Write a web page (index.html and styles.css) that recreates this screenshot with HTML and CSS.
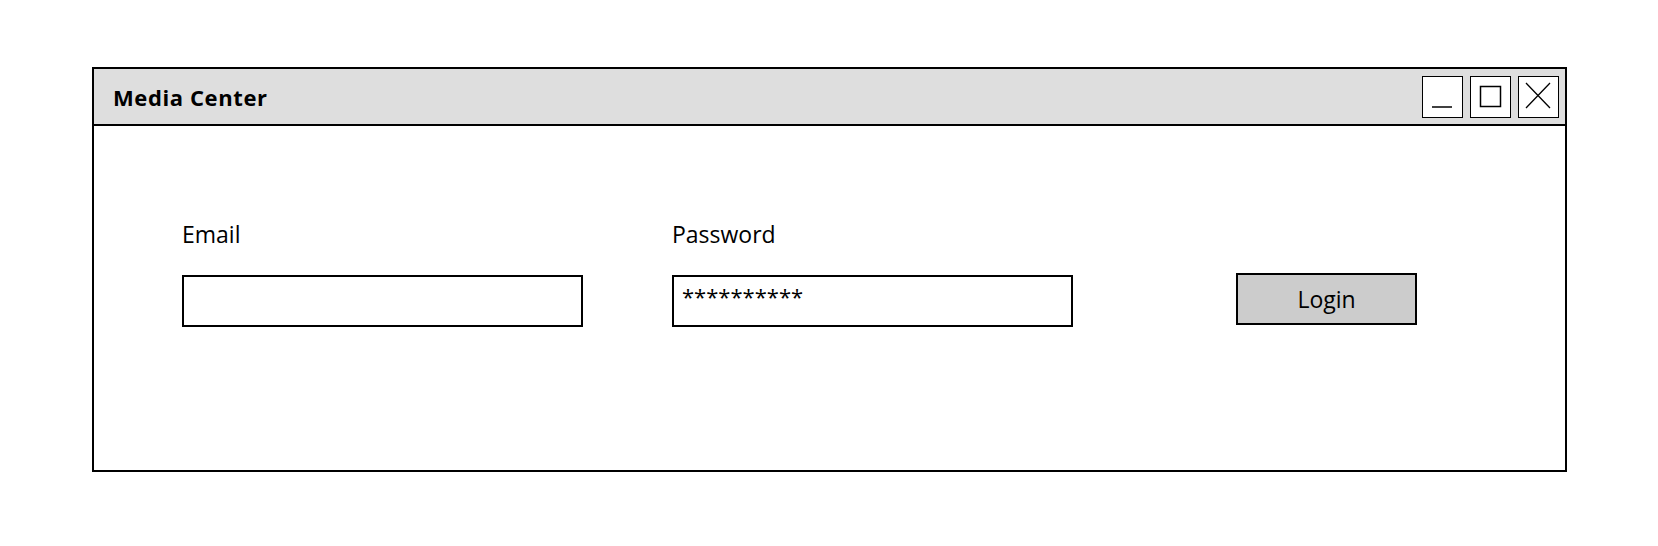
FILE: index.html
```html
<!DOCTYPE html>
<html lang="en">
<head>
    <meta charset="UTF-8">
    <meta name="viewport" content="width=device-width, initial-scale=1.0">
    <title>Media Center</title>
    <link rel="stylesheet" href="styles.css">
</head>
<body>
    <div class="window">
        <!-- title bar -->
        <header class="titlebar">
            <h1>Media Center</h1>
            <div class="win-buttons">
                <span class="win-btn">
                    <svg viewBox="0 0 40 42" width="40" height="42"><path d="M10 32 H30" stroke="#000" stroke-width="1.5" fill="none"/></svg>
                </span>
                <span class="win-btn">
                    <svg viewBox="0 0 40 42" width="40" height="42"><rect x="10.5" y="11.5" width="20" height="20" stroke="#000" stroke-width="1.5" fill="none"/></svg>
                </span>
                <span class="win-btn">
                    <svg viewBox="0 0 40 42" width="40" height="42"><path d="M8 8 L32 33 M32 8 L8 33" stroke="#000" stroke-width="1.3" fill="none"/></svg>
                </span>
            </div>
        </header>

        <!-- login form -->
        <form class="login-form">
            <div class="field">
                <label for="email">Email</label>
                <input type="text" id="email" class="textbox">
            </div>
            <div class="field">
                <label for="password">Password</label>
                <input type="text" id="password" class="textbox" value="**********">
            </div>
            <button type="button" class="login-btn">Login</button>
        </form>
    </div>
</body>
</html>
```

FILE: styles.css
```css
/* reset */
* {
    margin: 0;
    padding: 0;
    box-sizing: border-box;
}

body {
    font-family: "Comic Sans MS", "Open Sans", sans-serif;
    background-color: #fff;
    color: #000;
}

/* window frame */
.window {
    width: 1475px;
    height: 405px;
    margin: 67px 0 0 92px;
    border: 2px solid #000;
}

.titlebar {
    height: 57px;
    display: flex;
    align-items: center;
    justify-content: space-between;
    padding: 0 6px 0 19px;
    background-color: #dedede;
    border-bottom: 2px solid #000;
}

h1 {
    font-size: 22px;
    font-weight: bold;
    letter-spacing: 0.6px;
}

.win-buttons {
    display: flex;
    gap: 7px;
}

.win-btn {
    display: block;
    width: 41px;
    height: 42px;
    background-color: #fff;
    border: 1.5px solid #000;
}

.win-btn svg {
    display: block;
    margin: -1.5px;
}

/* form */
.login-form {
    display: flex;
    align-items: flex-end;
    padding: 93px 0 0 88px;
}

.field {
    display: flex;
    flex-direction: column;
    margin-right: 89px;
}

label {
    font-size: 23px;
    line-height: 30px;
    margin-bottom: 26px;
}

.textbox {
    width: 401px;
    height: 52px;
    padding: 0 8px 10px;
    font-family: inherit;
    font-size: 22px;
    border: 2px solid #000;
    background-color: #fff;
    outline: none;
}

.login-btn {
    width: 181px;
    height: 52px;
    margin: 0 0 2px 74px;
    font-family: inherit;
    font-size: 23px;
    background-color: #cccccc;
    border: 2px solid #000;
}
```
